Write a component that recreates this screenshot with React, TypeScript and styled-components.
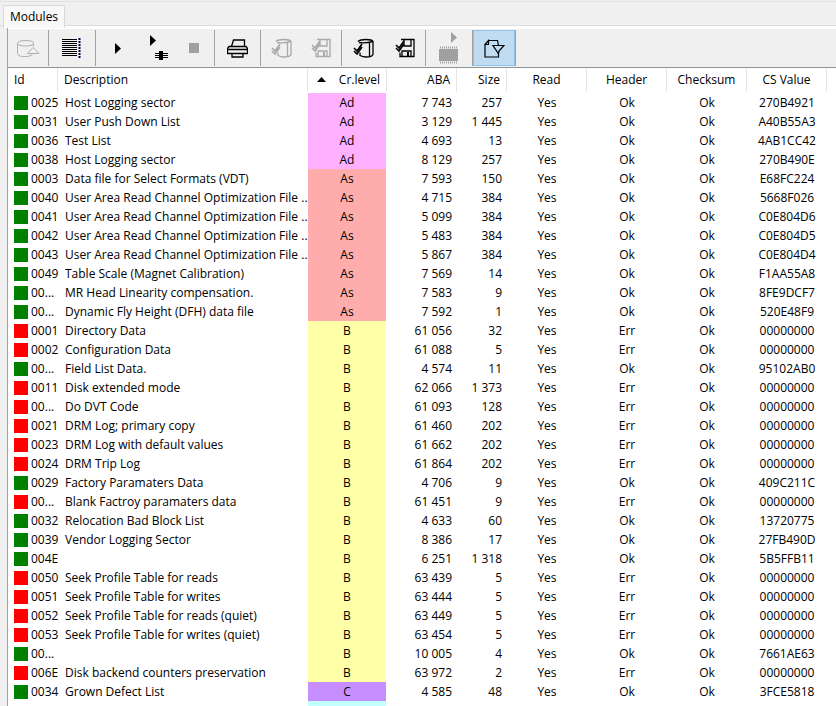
import React from "react";
import styled, { createGlobalStyle } from "styled-components";

const GlobalStyle = createGlobalStyle`
  html, body {
    margin: 0;
    padding: 0;
    background: #f0f0f0;
    overflow: hidden;
  }
`;

const Window = styled.div`
  width: 836px;
  height: 706px;
  overflow: hidden;
  padding-top: 1px;
  box-sizing: border-box;
  font-family: "Open Sans", "Noto Sans", sans-serif;
  font-size: 12px;
  color: #000;
  background: #f0f0f0;
`;

const TabStrip = styled.div`
  height: 25px;
  padding: 3px 0 0 3px;
  box-sizing: border-box;
  display: flex;
  border-top: 1px solid #e3e3e3;
  border-bottom: 1px solid #dcdcdc;
`;

const Tab = styled.div`
  width: 62px;
  height: 23px;
  box-sizing: border-box;
  background: #f8f8f8;
  border: 1px solid #d9d9d9;
  border-bottom: none;
  text-align: center;
  line-height: 21px;
`;

const Panel = styled.div`
  margin-left: 7px;
  border-left: 1px solid #a0a0a0;
  background: #fff;
  padding-top: 3px;
`;

const Toolbar = styled.div`
  height: 39px;
  box-sizing: border-box;
  background: #f0f0f0;
  border-bottom: 1px solid #8f9499;
  display: flex;
  align-items: center;
`;

const ToolButton = styled.div<{ $w: number; $active?: boolean }>`
  width: ${(p) => p.$w}px;
  height: 36px;
  box-sizing: border-box;
  display: flex;
  align-items: center;
  justify-content: center;
  background: ${(p) => (p.$active ? "#bfdcf3" : "transparent")};
  border: 1px solid ${(p) => (p.$active ? "#8cc4f0" : "transparent")};
`;

const ToolSep = styled.div`
  width: 1px;
  height: 36px;
  background: #a0a0a0;
  flex: none;
`;

const COLUMNS = "50px 250px 79px 70px 50px 80px 80px 80px 80px 8px";

const Header = styled.div`
  display: grid;
  grid-template-columns: ${COLUMNS};
  height: 25px;
`;

const HeadCell = styled.div<{ $align?: string }>`
  position: relative;
  box-sizing: border-box;
  border-right: 1px solid #e5e5e5;
  margin-bottom: 1px;
  line-height: 24px;
  padding: 0 6px;
  text-align: ${(p) => p.$align || "center"};
  white-space: nowrap;
`;

const SortArrow = styled.svg`
  position: absolute;
  left: 9px;
  top: 9px;
`;

const Row = styled.div`
  display: grid;
  grid-template-columns: ${COLUMNS};
  height: 19px;
  line-height: 19px;
  white-space: nowrap;
`;

const IdCell = styled.div`
  display: flex;
  align-items: center;
  padding-left: 6px;
`;

const Status = styled.span<{ $ok: boolean }>`
  width: 14px;
  height: 14px;
  margin-right: 3px;
  background: ${(p) => (p.$ok ? "#008000" : "#ff0000")};
  flex: none;
`;

const Desc = styled.div`
  padding-left: 7px;
  overflow: hidden;
`;

const LEVEL_COLORS: Record<string, string> = {
  Ad: "#ffb0ff",
  As: "#ffacac",
  B: "#ffffa8",
  C: "#c78eff",
  D: "#c4ffff",
};

const Level = styled.div<{ $level: string }>`
  background: ${(p) => LEVEL_COLORS[p.$level]};
  margin-right: 1px;
  text-align: center;
`;

const Num = styled.div`
  text-align: right;
  padding-right: 5px;
`;

const Mid = styled.div`
  text-align: center;
`;

type Module = [boolean, string, string, string, string, string, string, string];

const CH = "User Area Read Channel Optimization File ...";

const MODULES: Module[] = [
  [true, "0025", "Host Logging sector", "Ad", "7 743", "257", "Ok", "270B4921"],
  [true, "0031", "User Push Down List", "Ad", "3 129", "1 445", "Ok", "A40B55A3"],
  [true, "0036", "Test List", "Ad", "4 693", "13", "Ok", "4AB1CC42"],
  [true, "0038", "Host Logging sector", "Ad", "8 129", "257", "Ok", "270B490E"],
  [true, "0003", "Data file for Select Formats (VDT)", "As", "7 593", "150", "Ok", "E68FC224"],
  [true, "0040", CH, "As", "4 715", "384", "Ok", "5668F026"],
  [true, "0041", CH, "As", "5 099", "384", "Ok", "C0E804D6"],
  [true, "0042", CH, "As", "5 483", "384", "Ok", "C0E804D5"],
  [true, "0043", CH, "As", "5 867", "384", "Ok", "C0E804D4"],
  [true, "0049", "Table Scale (Magnet Calibration)", "As", "7 569", "14", "Ok", "F1AA55A8"],
  [true, "00...", "MR Head Linearity compensation.", "As", "7 583", "9", "Ok", "8FE9DCF7"],
  [true, "00...", "Dynamic Fly Height (DFH) data file", "As", "7 592", "1", "Ok", "520E48F9"],
  [false, "0001", "Directory Data", "B", "61 056", "32", "Err", "00000000"],
  [false, "0002", "Configuration Data", "B", "61 088", "5", "Err", "00000000"],
  [true, "00...", "Field List Data.", "B", "4 574", "11", "Ok", "95102AB0"],
  [false, "0011", "Disk extended mode", "B", "62 066", "1 373", "Err", "00000000"],
  [false, "00...", "Do DVT Code", "B", "61 093", "128", "Err", "00000000"],
  [false, "0021", "DRM Log; primary copy", "B", "61 460", "202", "Err", "00000000"],
  [false, "0023", "DRM Log with default values", "B", "61 662", "202", "Err", "00000000"],
  [false, "0024", "DRM Trip Log", "B", "61 864", "202", "Err", "00000000"],
  [true, "0029", "Factory Paramaters Data", "B", "4 706", "9", "Ok", "409C211C"],
  [false, "00...", "Blank Factroy paramaters data", "B", "61 451", "9", "Err", "00000000"],
  [true, "0032", "Relocation Bad Block List", "B", "4 633", "60", "Ok", "13720775"],
  [true, "0039", "Vendor Logging Sector", "B", "8 386", "17", "Ok", "27FB490D"],
  [true, "004E", "", "B", "6 251", "1 318", "Ok", "5B5FFB11"],
  [false, "0050", "Seek Profile Table for reads", "B", "63 439", "5", "Err", "00000000"],
  [false, "0051", "Seek Profile Table for writes", "B", "63 444", "5", "Err", "00000000"],
  [false, "0052", "Seek Profile Table for reads (quiet)", "B", "63 449", "5", "Err", "00000000"],
  [false, "0053", "Seek Profile Table for writes (quiet)", "B", "63 454", "5", "Err", "00000000"],
  [true, "00...", "", "B", "10 005", "4", "Ok", "7661AE63"],
  [false, "006E", "Disk backend counters preservation", "B", "63 972", "2", "Err", "00000000"],
  [true, "0034", "Grown Defect List", "C", "4 585", "48", "Ok", "3FCE5818"],
];

const DriveIcon = ({ color }: { color: string }) => (
  <svg width="24" height="20" viewBox="0 0 24 20" fill="none" stroke={color}>
    <path d="M1.5 5.5v10q0 2 4 3h6q5-.5 5-3v-1M1.5 5.5q0-3 8-3t8 3v3M1.5 5.5q1 2.500 8 2.500t8-2.500" />
    <path d="M11.500 15.500l5.500-6 6 6z" fill="#f0f0f0" />
  </svg>
);

const ListIcon = () => (
  <svg width="20" height="20" viewBox="0 0 20 20">
    <path d="M0 1.500h15M0 3.500h15M0 5.500h15M0 7.500h15M0 9.500h15M0 11.500h15M0 13.500h15M0 15.500h15M0 17.500h15" stroke="#000" />
    <path d="M17.500 0v20" stroke="#000060" strokeWidth="2" strokeDasharray="2 1" />
  </svg>
);

const PlayIcon = () => (
  <svg width="7" height="11" viewBox="0 0 7 11">
    <path d="M0 0l6 5.500-6 5.500z" fill="#000" />
  </svg>
);

const PlayStepIcon = () => (
  <svg width="22" height="26" viewBox="0 0 22 26">
    <path d="M3 0l6 5.500-6 5.500z" fill="#000" />
    <path d="M8 18.500h13M8 20.500h13M8 22.500h13" stroke="#000" />
    <rect x="12" y="16" width="4" height="9" fill="#000" />
  </svg>
);

const StopIcon = () => (
  <svg width="10" height="10" viewBox="0 0 10 10">
    <rect width="10" height="10" fill="#a0a0a0" />
  </svg>
);

const PrinterIcon = () => (
  <svg width="21" height="19" viewBox="0 0 21 19" fill="none" stroke="#000" strokeWidth="1.300">
    <path d="M4.500 7.500l2-6.500h11v6.500" />
    <path d="M2 7.500h17l1.500 2v5h-20v-5z" />
    <path d="M5 14v4h11v-4M1 10.500h19" />
  </svg>
);

const CheckDriveIcon = ({ color }: { color: string }) => (
  <svg width="21" height="20" viewBox="0 0 21 20" fill="none" stroke={color} strokeWidth="1.300">
    <path d="M5 3.500q2-2 8-2t7 2v13q-1 2.500-7 2.500-3 0-6-1.500v-3" />
    <path d="M6 4.500q6 1 14-1M16.500 5v13" />
    <path d="M1 10l3 3 5-7M1 13l3 3 5-7" strokeWidth="1.600" />
  </svg>
);

const CheckDiskIcon = ({ color }: { color: string }) => (
  <svg width="20" height="20" viewBox="0 0 20 20" fill="none" stroke={color} strokeWidth="1.300">
    <path d="M6 1.500h13v17h-14v-4" />
    <path d="M9 2v6h7v-6M7 18v-5h9v5" />
    <rect x="12" y="14" width="2" height="4" fill={color} stroke="none" />
    <path d="M1 7l3 3 5-7M1 10l3 3 5-7" strokeWidth="1.600" />
  </svg>
);

const ChipPlayIcon = () => (
  <svg width="20" height="32" viewBox="0 0 20 32">
    <path d="M12 0l6 5.500-6 5.500z" fill="#a0a0a0" />
    <rect x="0" y="17" width="19" height="12" fill="#a0a0a0" />
    <path d="M1 15.500h17M1 30.500h17" stroke="#a0a0a0" strokeWidth="2" strokeDasharray="1 1" />
  </svg>
);

const FilterPageIcon = () => (
  <svg width="21" height="19" viewBox="0 0 21 19" fill="none" stroke="#000" strokeWidth="1.200">
    <path d="M4.500 1.500h9l1 5M1 5.500l3.500-4v4zM1 5.500v12.500h13.500v-5" />
    <path d="M9 6.500h11l-5 5.500v1l-1 1z" fill="#bfdcf3" />
  </svg>
);

const headers = ["Read", "Header", "Checksum", "CS Value"];

export default function App() {
  return (
    <Window>
      <GlobalStyle />
      <TabStrip>
        <Tab>Modules</Tab>
      </TabStrip>
      <Panel>
        <Toolbar>
          <ToolButton $w={40}><DriveIcon color="#b0b0b0" /></ToolButton>
          <ToolSep />
          <ToolButton $w={46}><ListIcon /></ToolButton>
          <ToolSep />
          <ToolButton $w={45}><PlayIcon /></ToolButton>
          <ToolButton $w={33}><PlayStepIcon /></ToolButton>
          <ToolButton $w={40}><StopIcon /></ToolButton>
          <ToolSep />
          <ToolButton $w={45}><PrinterIcon /></ToolButton>
          <ToolSep />
          <ToolButton $w={40}><CheckDriveIcon color="#a8a8a8" /></ToolButton>
          <ToolButton $w={40}><CheckDiskIcon color="#a8a8a8" /></ToolButton>
          <ToolSep />
          <ToolButton $w={43}><CheckDriveIcon color="#000" /></ToolButton>
          <ToolButton $w={40}><CheckDiskIcon color="#000" /></ToolButton>
          <ToolSep />
          <ToolButton $w={46}><ChipPlayIcon /></ToolButton>
          <ToolSep />
          <ToolButton $w={42} $active><FilterPageIcon /></ToolButton>
          <ToolSep />
        </Toolbar>
        <Header>
          <HeadCell $align="left">Id</HeadCell>
          <HeadCell $align="left">Description</HeadCell>
          <HeadCell $align="right">
            <SortArrow width="9" height="5" viewBox="0 0 9 5">
              <path d="M4.500 0l4.500 5h-9z" fill="#000" />
            </SortArrow>
            Cr.level
          </HeadCell>
          <HeadCell $align="right">ABA</HeadCell>
          <HeadCell $align="right">Size</HeadCell>
          {headers.map((h) => (
            <HeadCell key={h}>{h}</HeadCell>
          ))}
        </Header>
        {MODULES.map(([ok, id, desc, level, aba, size, head, cs]) => (
          <Row key={id + desc + aba}>
            <IdCell>
              <Status $ok={ok} />
              {id}
            </IdCell>
            <Desc>{desc}</Desc>
            <Level $level={level}>{level}</Level>
            <Num>{aba}</Num>
            <Num>{size}</Num>
            <Mid>Yes</Mid>
            <Mid>{head}</Mid>
            <Mid>Ok</Mid>
            <Mid>{cs}</Mid>
          </Row>
        ))}
        <Row>
          <div />
          <div />
          <Level $level="D" />
        </Row>
      </Panel>
    </Window>
  );
}
